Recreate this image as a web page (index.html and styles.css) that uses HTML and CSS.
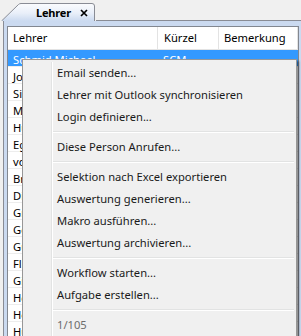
FILE: index.html
```html
<!DOCTYPE html>
<html lang="de">
<head>
  <meta charset="UTF-8" />
  <title>Lehrer</title>
  <link rel="stylesheet" href="styles.css">
</head>
<body>

<!-- Tab strip -->
<div class="tabbar">
  <div class="tab">
    <svg class="tab-shape" width="96" height="21" viewBox="0 0 96 21">
      <defs>
        <linearGradient id="tabGrad" x1="0" y1="0" x2="0" y2="1">
          <stop offset="0" stop-color="#fbfcfe"/>
          <stop offset="0.55" stop-color="#e9eff9"/>
          <stop offset="1" stop-color="#cbdaf0"/>
        </linearGradient>
      </defs>
      <path d="M1.5 21 L18.5 4.5 Q19.5 3.5 21 3.5 L92 3.5 Q94.5 3.5 94.5 6 L94.5 21 Z" fill="url(#tabGrad)"/>
      <path d="M1.5 21 L18.5 4.5 Q19.5 3.5 21 3.5 L92 3.5 Q94.5 3.5 94.5 6 L94.5 21" fill="none" stroke="#898c95"/>
    </svg>
    <span class="tab-title">Lehrer</span>
    <svg class="tab-close" width="8" height="8" viewBox="0 0 8 8">
      <path d="M1 1 L7 7 M7 1 L1 7" stroke="#000" stroke-width="1.7"/>
    </svg>
  </div>
  <div class="tab-fill"></div>
</div>

<!-- Tab page with list -->
<div class="frame">
  <div class="list">
    <div class="list-head">
      <div class="cell">Lehrer</div>
      <div class="cell">Kürzel</div>
      <div class="cell">Bemerkung</div>
    </div>
    <div class="row sel"><div class="cell">Schmid Michael</div><div class="cell">SCM</div><div class="cell"></div></div>
    <div class="row"><div class="cell">Jost Andreas</div><div class="cell">JOA</div><div class="cell"></div></div>
    <div class="row"><div class="cell">Sigrist Karin</div><div class="cell">SIK</div><div class="cell"></div></div>
    <div class="row"><div class="cell">Meier Thomas</div><div class="cell">MET</div><div class="cell"></div></div>
    <div class="row"><div class="cell">Huber Anna</div><div class="cell">HUA</div><div class="cell"></div></div>
    <div class="row"><div class="cell">Egli Peter</div><div class="cell">EGP</div><div class="cell"></div></div>
    <div class="row"><div class="cell">von Arx Lukas</div><div class="cell">VAL</div><div class="cell"></div></div>
    <div class="row"><div class="cell">Brunner Eva</div><div class="cell">BRE</div><div class="cell"></div></div>
    <div class="row"><div class="cell">Dietrich Urs</div><div class="cell">DIU</div><div class="cell"></div></div>
    <div class="row"><div class="cell">Graf Simone</div><div class="cell">GRS</div><div class="cell"></div></div>
    <div class="row"><div class="cell">Gerber Martin</div><div class="cell">GEM</div><div class="cell"></div></div>
    <div class="row"><div class="cell">Gut Claudia</div><div class="cell">GUC</div><div class="cell"></div></div>
    <div class="row"><div class="cell">Fluri Daniel</div><div class="cell">FLD</div><div class="cell"></div></div>
    <div class="row"><div class="cell">Gisler Beat</div><div class="cell">GIB</div><div class="cell"></div></div>
    <div class="row"><div class="cell">Hess Monika</div><div class="cell">HEM</div><div class="cell"></div></div>
    <div class="row"><div class="cell">Hofer Reto</div><div class="cell">HOR</div><div class="cell"></div></div>
    <div class="row"><div class="cell">Hug Sandra</div><div class="cell">HUS</div><div class="cell"></div></div>
  </div>
</div>

<!-- Context menu -->
<div class="menu">
  <div class="item">Email senden...</div>
  <div class="item">Lehrer mit Outlook synchronisieren</div>
  <div class="item">Login definieren...</div>
  <div class="sep"></div>
  <div class="item">Diese Person Anrufen...</div>
  <div class="sep"></div>
  <div class="item">Selektion nach Excel exportieren</div>
  <div class="item">Auswertung generieren...</div>
  <div class="item">Makro ausführen...</div>
  <div class="item">Auswertung archivieren...</div>
  <div class="sep"></div>
  <div class="item">Workflow starten...</div>
  <div class="item">Aufgabe erstellen...</div>
  <div class="sep"></div>
  <div class="item disabled">1/105</div>
</div>

</body>
</html>
```

FILE: styles.css
```css
* { margin: 0; padding: 0; box-sizing: border-box; }

body {
  font-family: 'Noto Sans', sans-serif;
  font-size: 11.2px;
  color: #000;
  background: #f0f0f0;
  width: 301px;
  height: 336px;
  overflow: hidden;
}

/* Tab strip */
.tabbar {
  display: flex;
  height: 21px;
}

.tab {
  position: relative;
  width: 96px;
  height: 21px;
  display: flex;
  align-items: center;
  padding: 3px 8px 0 36px;
}

.tab-shape {
  position: absolute;
  top: 0;
  left: 0;
}

.tab-title {
  position: relative;
  font-weight: bold;
  font-size: 11px;
  letter-spacing: -0.2px;
}

.tab-close {
  position: relative;
  margin-left: auto;
  margin-top: 1px;
}

.tab-fill {
  flex: 1;
  height: 21px;
  border-bottom: 1px solid #898c95;
}

/* Tab page */
.frame {
  margin-left: 3px;
  border-left: 1px solid #898c95;
  background: #cbdaf0;
  padding: 5px 2px 0 3px;
  height: 400px;
}

.list {
  background: #fff;
  border: 1px solid #828790;
  height: 400px;
}

.list-head, .row {
  display: grid;
  grid-template-columns: 150px 61px 1fr;
}

.list-head {
  height: 23px;
  border-bottom: 1px solid #e3e3e3;
  align-items: center;
}

.list-head .cell {
  padding-left: 5px;
  height: 22px;
  line-height: 22px;
  border-right: 1px solid #e3e3e3;
}

.list-head .cell:nth-child(2) {
  padding-left: 6px;
}

.row {
  height: 17px;
  border-bottom: 1px solid #ededed;
}

.row .cell {
  padding: 1px 0 0 5px;
  line-height: 17px;
  white-space: nowrap;
}

.row.sel {
  background: #3399ff;
  color: #fff;
}

/* Context menu */
.menu {
  position: absolute;
  left: 22px;
  top: 59px;
  width: 275px;
  height: 300px;
  background: #f0f0f0;
  border: 1px solid #979797;
  padding: 2px;
  box-shadow: 2px 2px 2px rgba(0,0,0,0.45);
}

.menu::before {
  content: "";
  position: absolute;
  top: 2px;
  bottom: 2px;
  left: 28px;
  width: 1px;
  background: #e2e3e3;
  box-shadow: 1px 0 0 #fff;
}

.item {
  height: 22px;
  line-height: 22px;
  padding-left: 32px;
  color: #1a1a1a;
}

.item.disabled {
  color: #6d6d6d;
}

.sep {
  height: 2px;
  margin: 3px 0 3px 28px;
  background: #e2e3e3;
  border-bottom: 1px solid #fff;
}
```
